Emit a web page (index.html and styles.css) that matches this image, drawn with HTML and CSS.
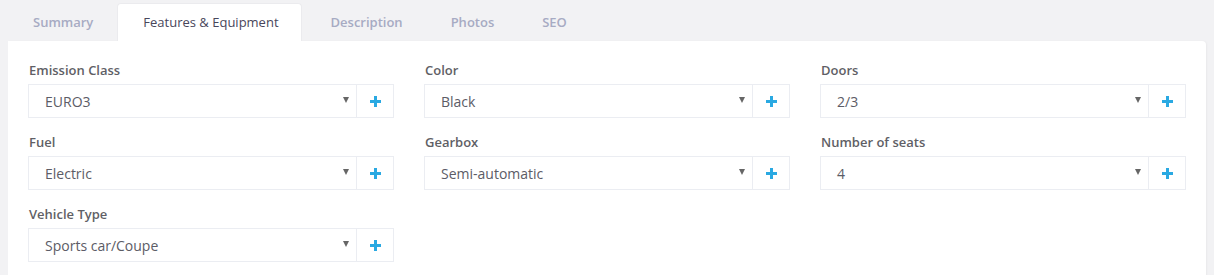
FILE: index.html
```html
<!DOCTYPE html>
<html>
<head>
<meta charset="utf-8">
<link rel="stylesheet" href="styles.css">
</head>
<body>
<div class="tabs">
  <div class="tab">Summary</div>
  <div class="tab active">Features &amp; Equipment</div>
  <div class="tab">Description</div>
  <div class="tab">Photos</div>
  <div class="tab">SEO</div>
</div>
<div class="panel">
  <div class="grid">
    <div class="field">
      <label class="lbl">Emission Class</label>
      <div class="group"><div class="select"><span>EURO3</span><i class="caret"></i></div><div class="add"><i class="plus"></i></div></div>
    </div>
    <div class="field">
      <label class="lbl">Color</label>
      <div class="group"><div class="select"><span>Black</span><i class="caret"></i></div><div class="add"><i class="plus"></i></div></div>
    </div>
    <div class="field">
      <label class="lbl">Doors</label>
      <div class="group"><div class="select"><span>2/3</span><i class="caret"></i></div><div class="add"><i class="plus"></i></div></div>
    </div>
    <div class="field">
      <label class="lbl">Fuel</label>
      <div class="group"><div class="select"><span>Electric</span><i class="caret"></i></div><div class="add"><i class="plus"></i></div></div>
    </div>
    <div class="field">
      <label class="lbl">Gearbox</label>
      <div class="group"><div class="select"><span>Semi-automatic</span><i class="caret"></i></div><div class="add"><i class="plus"></i></div></div>
    </div>
    <div class="field">
      <label class="lbl">Number of seats</label>
      <div class="group"><div class="select"><span>4</span><i class="caret"></i></div><div class="add"><i class="plus"></i></div></div>
    </div>
    <div class="field">
      <label class="lbl">Vehicle Type</label>
      <div class="group"><div class="select"><span>Sports car/Coupe</span><i class="caret"></i></div><div class="add"><i class="plus"></i></div></div>
    </div>
  </div>
</div>
</body>
</html>
```
FILE: styles.css
```css
* { box-sizing: border-box; }
body {
  margin: 0;
  background: #f2f2f4;
  font-family: "Open Sans", "Liberation Sans", sans-serif;
}
.tabs {
  display: flex;
  padding: 3px 0 0 9px;
}
.tab {
  padding: 0 24px;
  height: 38px;
  line-height: 38px;
  font-size: 13px;
  font-weight: 600;
  color: #a7abc3;
  border-radius: 4px 4px 0 0;
}
.tab.active {
  background: #fff;
  color: #48465b;
  font-weight: 400;
  padding: 0 22px 0 25px;
  margin-right: 5px;
  border: 1px solid #ebebee;
  border-bottom: none;
  line-height: 37px;
}
.panel {
  margin: 0 8px;
  background: #fff;
  padding: 20px 20px 30px;
  border-radius: 0 4px 0 0;
  box-shadow: 1px 0 2px rgba(0,0,0,0.04);
}
.grid {
  display: grid;
  grid-template-columns: repeat(3, 1fr);
  column-gap: 30px;
  row-gap: 15px;
}
.field { display: flex; flex-direction: column; }
.lbl {
  font-size: 13px;
  font-weight: 600;
  color: #5f5f66;
  line-height: 18px;
  margin-bottom: 5px;
  padding-left: 1px;
}
.group {
  display: flex;
  height: 34px;
  border: 1px solid #ebedf2;
}
.select {
  flex: 1;
  display: flex;
  align-items: center;
  padding: 0 7px 0 16px;
  font-size: 14px;
  color: #5c5c66;
}
.select span { flex: 1; }
.caret {
  width: 0;
  height: 0;
  border-left: 3.5px solid transparent;
  border-right: 3.5px solid transparent;
  border-top: 6px solid #666;
  margin-top: -2px;
}
.add {
  width: 37px;
  border-left: 1px solid #ebedf2;
  display: flex;
  align-items: center;
  justify-content: center;
}
.plus {
  position: relative;
  width: 11px;
  height: 11px;
}
.plus::before, .plus::after {
  content: "";
  position: absolute;
  background: #2aa9e2;
}
.plus::before { left: 0; top: 4px; width: 11px; height: 3px; }
.plus::after { left: 4px; top: 0; width: 3px; height: 11px; }
```
